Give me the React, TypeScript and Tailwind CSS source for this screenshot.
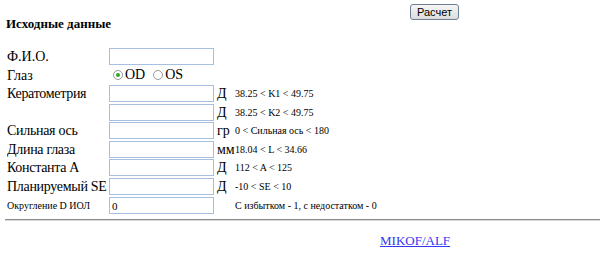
import React from 'react';

type Row = {
  label: string;
  unit?: string;
  range?: string;
  h: string;
};

const rows: Row[] = [
  { label: 'Кератометрия', unit: 'Д', range: '38.25 < K1 < 49.75', h: 'h-[19px]' },
  { label: '', unit: 'Д', range: '38.25 < K2 < 49.75', h: 'h-[18px]' },
  { label: 'Сильная ось', unit: 'гр', range: '0 < Сильная ось < 180', h: 'h-[19px]' },
  { label: 'Длина глаза', unit: 'мм', range: '18.04 < L < 34.66', h: 'h-[18px]' },
  { label: 'Константа А', unit: 'Д', range: '112 < A < 125', h: 'h-[19px]' },
  { label: 'Планируемый SE', unit: 'Д', range: '-10 < SE < 10', h: 'h-[19px]' },
];

function Field({ value = '' }: { value?: string }) {
  return (
    <input
      type="text"
      defaultValue={value}
      className="w-[105px] h-[17px] shrink-0 border border-[#a7c0e2] bg-white px-[2px] text-[11px] text-black font-['Liberation_Serif'] outline-none"
    />
  );
}

function Radio({ checked }: { checked?: boolean }) {
  return (
    <span className="w-[10px] h-[10px] rounded-full border border-[#9a9a9a] bg-white flex items-center justify-center">
      {checked && <span className="w-[4px] h-[4px] rounded-full bg-[#2ea82e]" />}
    </span>
  );
}

export default function App() {
  return (
    <div className="w-[600px] h-[262px] bg-white text-black font-['Liberation_Serif'] overflow-hidden">
      {/* Header: title + calc button */}
      <div className="flex items-start">
        <h3 className="mt-[16px] pl-[6px] text-[13px] leading-[16px] font-bold">Исходные данные</h3>
        <button className="ml-auto mr-[141px] mt-[4px] w-[49px] h-[16px] rounded-[3px] border border-[#6f7f95] bg-gradient-to-b from-[#f6f6f6] to-[#dcdcdc] text-[11px] leading-none text-black font-['Liberation_Sans']">
          Расчет
        </button>
      </div>

      {/* Form */}
      <div className="mt-[15px] pl-[7px] flex flex-col text-[14px]">
        <div className="h-[19px] flex items-center">
          <span className="w-[102px]">Ф.И.О.</span>
          <Field />
        </div>
        <div className="h-[18px] flex items-center">
          <span className="w-[106px]">Глаз</span>
          <Radio checked />
          <span className="ml-[2px] mr-[8px] leading-none">OD</span>
          <Radio />
          <span className="ml-[2px] leading-none">OS</span>
        </div>
        {rows.map((r, i) => (
          <div key={i} className={`${r.h} flex items-center`}>
            <span className="w-[102px] whitespace-nowrap tracking-[-0.3px] overflow-hidden">{r.label}</span>
            <Field />
            <span className="ml-[3px] w-[17px] whitespace-nowrap">{r.unit}</span>
            <span className="ml-[1px] text-[10px]">{r.range}</span>
          </div>
        ))}
        <div className="h-[19px] flex items-center">
          <span className="w-[102px] text-[10px]">Округление D ИОЛ</span>
          <Field value="0" />
          <span className="ml-[21px] text-[10px]">С избытком - 1, с недостатком - 0</span>
        </div>
      </div>

      <div className="mt-[4px] ml-[5px] h-[2px] bg-[#8c8c8c] border-b border-[#d8d8d8]" />

      <div className="mt-[11px] pl-[380px] leading-[16px]">
        <a href="#" className="text-[13px] text-[#3535f5] underline">MIKOF/ALF</a>
      </div>
    </div>
  );
}
